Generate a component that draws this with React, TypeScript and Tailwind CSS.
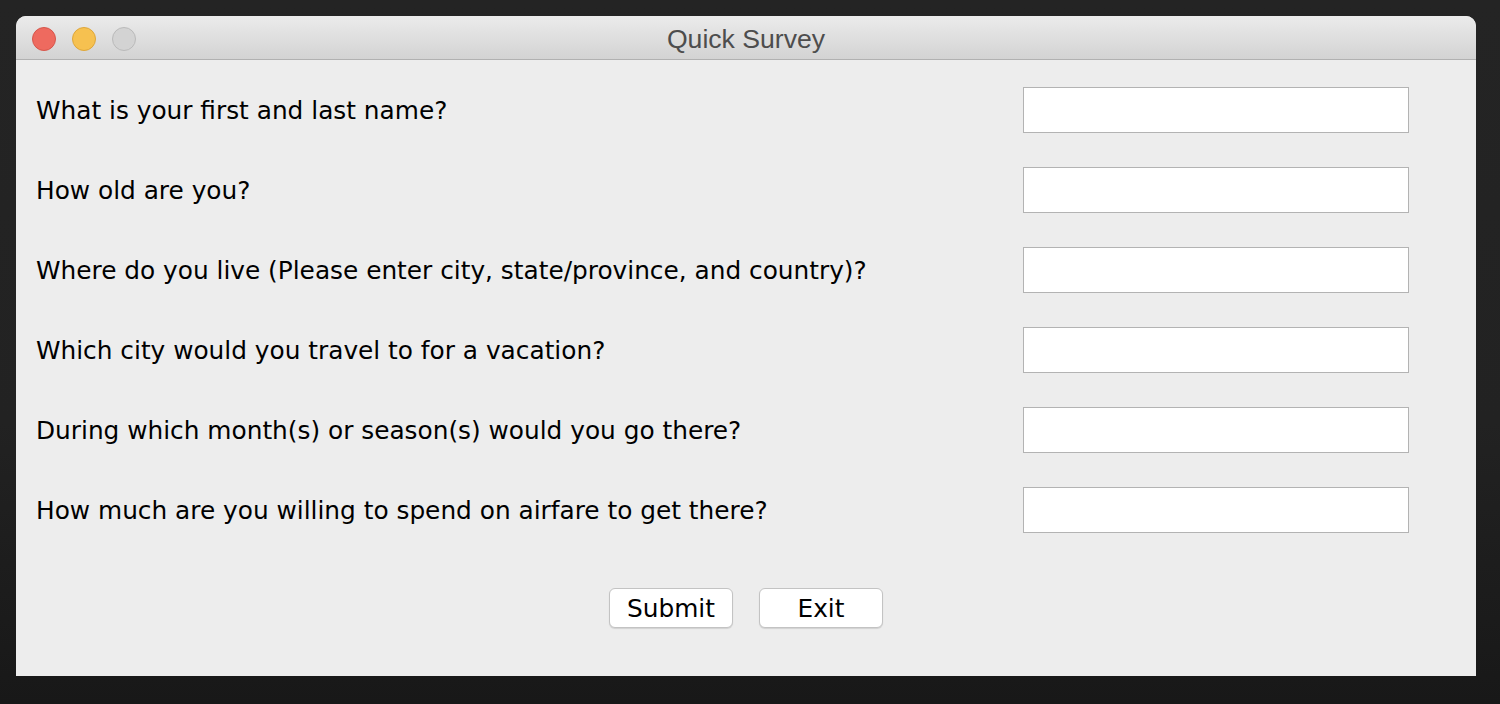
import React from "react";

const questions = [
  "What is your first and last name?",
  "How old are you?",
  "Where do you live (Please enter city, state/province, and country)?",
  "Which city would you travel to for a vacation?",
  "During which month(s) or season(s) would you go there?",
  "How much are you willing to spend on airfare to get there?",
];

export default function App() {
  return (
    <div className="w-[1500px] h-[704px] bg-[linear-gradient(to_bottom,#242424_0%,#222222_60%,#181818_100%)] pt-4 pl-4 overflow-hidden">
      <div className="w-[1460px] h-[660px] flex flex-col bg-[#ededed] rounded-t-[10px] overflow-hidden">
        {/* Title bar */}
        <div className="relative h-[44px] shrink-0 bg-[linear-gradient(to_bottom,#ebebeb,#d3d3d3)] border-b border-[#b1b1b1] flex items-center justify-center">
          <div className="absolute left-[16px] top-[11px] flex gap-[16px]">
            <div className="w-[24px] h-[24px] rounded-full bg-[#ee6a5f] border border-[#d6564b]" />
            <div className="w-[24px] h-[24px] rounded-full bg-[#f6c150] border border-[#dea63a]" />
            <div className="w-[24px] h-[24px] rounded-full bg-[#d3d3d3] border border-[#bababa]" />
          </div>
          <span className="text-[26.6px] text-[#4d4d4d] font-['Liberation_Sans',Arial,sans-serif] leading-none mt-[4px]">
            Quick Survey
          </span>
        </div>

        {/* Content */}
        <div className="flex flex-col font-['DejaVu_Sans',Verdana,sans-serif] text-black">
          <div className="flex flex-col gap-[34px] pt-[27px] pl-[20px] pr-[67px]">
            {questions.map((q) => (
              <div key={q} className="flex items-center justify-between h-[46px]">
                <span className="text-[24.8px] leading-none pt-[3px]">{q}</span>
                <div className="w-[386px] h-[46px] bg-white border border-[#b3b3b3]" />
              </div>
            ))}
          </div>
          <div className="flex justify-center gap-[26px] mt-[55px]">
            <button className="w-[124px] h-[40px] pt-[3px] bg-white rounded-[6px] border border-[#c3c3c3] shadow-[0_1px_1px_rgba(0,0,0,0.12)] text-[24.8px] leading-none text-black">
              Submit
            </button>
            <button className="w-[124px] h-[40px] pt-[3px] bg-white rounded-[6px] border border-[#c3c3c3] shadow-[0_1px_1px_rgba(0,0,0,0.12)] text-[24.8px] leading-none text-black">
              Exit
            </button>
          </div>
        </div>
      </div>
    </div>
  );
}
